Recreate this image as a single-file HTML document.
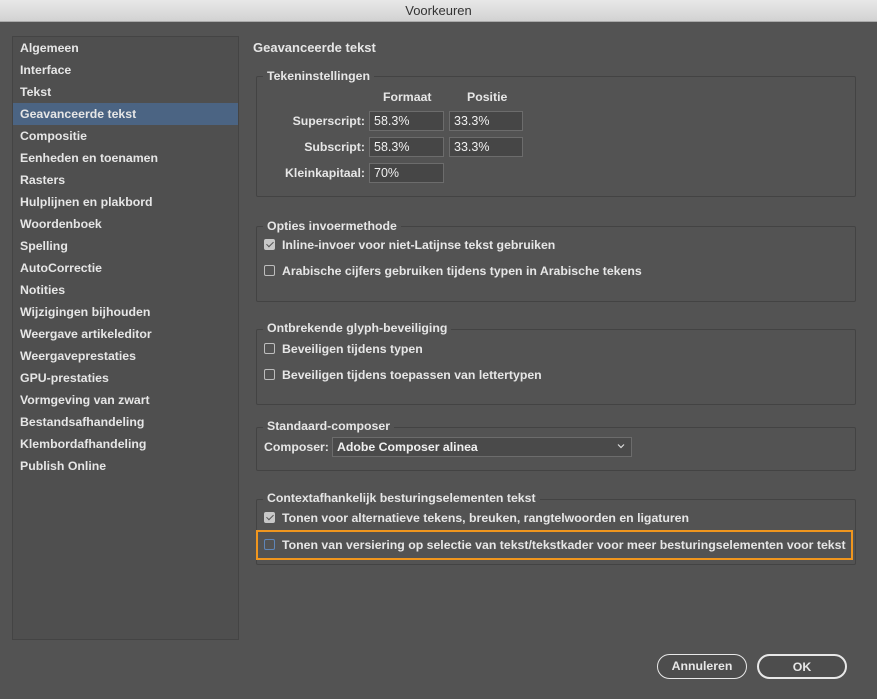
<!DOCTYPE html>
<html><head><meta charset="utf-8"><style>
*{margin:0;padding:0;box-sizing:border-box}
body{width:877px;height:699px;background:#535353;font-family:"Liberation Sans",sans-serif;font-size:12.3px;font-weight:bold;color:#e6e6e6;position:relative;overflow:hidden}
.a{position:absolute;white-space:nowrap;line-height:14px}
.r{text-align:right}
.title{position:absolute;left:0;top:0;width:877px;height:22px;background:linear-gradient(#e8e8e8,#d2d2d2);border-bottom:1px solid #aaa;color:#333;text-align:center;font-size:13px;font-weight:normal;line-height:22px}
.side{position:absolute;left:12px;top:36px;width:227px;height:604px;background:#4f4f4f;border:1px solid #444}
.sel{position:absolute;left:13px;top:103px;width:225px;height:22px;background:#4b6483}
.grp{position:absolute;left:256px;width:600px;border:1px solid #434343;border-radius:2px}
.lg{position:absolute;background:#535353;padding:0 4px;left:263px;line-height:14px}
.inp{position:absolute;height:20px;background:#464646;border:1px solid #6c6c6c;color:#f0f0f0;padding-left:4px;line-height:19px;font-weight:normal;font-size:12.5px}
.cb{position:absolute;left:264px;width:11px;height:11px;border:1px solid #bdbdbd;border-radius:2px}
.cb.on{background:#c8c8c8;border-color:#c8c8c8}
.cb.on:after{content:"";position:absolute;left:3px;top:0px;width:3px;height:6px;border:solid #555;border-width:0 1.5px 1.5px 0;transform:rotate(45deg)}
.btn{position:absolute;top:654px;height:25px;border:1.5px solid #e8e8e8;border-radius:13px;background:#4d4d4d;text-align:center;line-height:22px}
</style></head><body>
<div class="title">Voorkeuren</div>
<div class="side"></div>
<div class="sel"></div>
<div class="a" style="left:20px;top:41px">Algemeen</div>
<div class="a" style="left:20px;top:63px">Interface</div>
<div class="a" style="left:20px;top:85px">Tekst</div>
<div class="a" style="left:20px;top:107px">Geavanceerde tekst</div>
<div class="a" style="left:20px;top:129px">Compositie</div>
<div class="a" style="left:20px;top:151px">Eenheden en toenamen</div>
<div class="a" style="left:20px;top:173px">Rasters</div>
<div class="a" style="left:20px;top:195px">Hulplijnen en plakbord</div>
<div class="a" style="left:20px;top:217px">Woordenboek</div>
<div class="a" style="left:20px;top:239px">Spelling</div>
<div class="a" style="left:20px;top:261px">AutoCorrectie</div>
<div class="a" style="left:20px;top:283px">Notities</div>
<div class="a" style="left:20px;top:305px">Wijzigingen bijhouden</div>
<div class="a" style="left:20px;top:327px">Weergave artikeleditor</div>
<div class="a" style="left:20px;top:349px">Weergaveprestaties</div>
<div class="a" style="left:20px;top:371px">GPU-prestaties</div>
<div class="a" style="left:20px;top:393px">Vormgeving van zwart</div>
<div class="a" style="left:20px;top:415px">Bestandsafhandeling</div>
<div class="a" style="left:20px;top:437px">Klembordafhandeling</div>
<div class="a" style="left:20px;top:459px">Publish Online</div>

<div class="a" style="left:253px;top:41px;font-size:13px">Geavanceerde tekst</div>

<div class="grp" style="top:76px;height:121px"></div>
<div class="lg" style="top:69px">Tekeninstellingen</div>
<div class="a" style="left:383px;top:90px">Formaat</div>
<div class="a" style="left:467px;top:90px">Positie</div>
<div class="a r" style="left:265px;width:100px;top:114px">Superscript:</div>
<div class="a r" style="left:265px;width:100px;top:140px">Subscript:</div>
<div class="a r" style="left:265px;width:100px;top:166px">Kleinkapitaal:</div>
<div class="inp" style="left:369px;top:111px;width:75px">58.3%</div>
<div class="inp" style="left:449px;top:111px;width:74px">33.3%</div>
<div class="inp" style="left:369px;top:137px;width:75px">58.3%</div>
<div class="inp" style="left:449px;top:137px;width:74px">33.3%</div>
<div class="inp" style="left:369px;top:163px;width:75px">70%</div>

<div class="grp" style="top:226px;height:76px"></div>
<div class="lg" style="top:219px">Opties invoermethode</div>
<div class="cb on" style="top:239px"></div>
<div class="a" style="left:282px;top:238px">Inline-invoer voor niet-Latijnse tekst gebruiken</div>
<div class="cb" style="top:265px"></div>
<div class="a" style="left:282px;top:264px">Arabische cijfers gebruiken tijdens typen in Arabische tekens</div>

<div class="grp" style="top:329px;height:76px"></div>
<div class="lg" style="top:321px">Ontbrekende glyph-beveiliging</div>
<div class="cb" style="top:343px"></div>
<div class="a" style="left:282px;top:342px">Beveiligen tijdens typen</div>
<div class="cb" style="top:369px"></div>
<div class="a" style="left:282px;top:368px">Beveiligen tijdens toepassen van lettertypen</div>

<div class="grp" style="top:427px;height:44px"></div>
<div class="lg" style="top:419px">Standaard-composer</div>
<div class="a" style="left:264px;top:440px">Composer:</div>
<div class="inp" style="left:332px;top:437px;width:300px;background:#4a4a4a;font-weight:bold;font-size:12.3px">Adobe Composer alinea</div>
<svg class="a" style="left:617px;top:442px" width="8" height="8"><path d="M1 2.5L4 5.5L7 2.5" stroke="#ddd" fill="none" stroke-width="1.2"/></svg>

<div class="grp" style="top:499px;height:66px"></div>
<div class="lg" style="top:491px">Contextafhankelijk besturingselementen tekst</div>
<div class="cb on" style="top:512px"></div>
<div class="a" style="left:282px;top:511px">Tonen voor alternatieve tekens, breuken, rangtelwoorden en ligaturen</div>
<div style="position:absolute;left:256px;top:530px;width:597px;height:30px;border:2px solid #f0961e"></div>
<div class="cb" style="top:539px;border-color:#5f86b8"></div>
<div class="a" style="left:282px;top:538px">Tonen van versiering op selectie van tekst/tekstkader voor meer besturingselementen voor tekst</div>

<div class="btn" style="left:657px;width:90px">Annuleren</div>
<div class="btn" style="left:757px;width:90px;border-width:2px">OK</div>
</body></html>
